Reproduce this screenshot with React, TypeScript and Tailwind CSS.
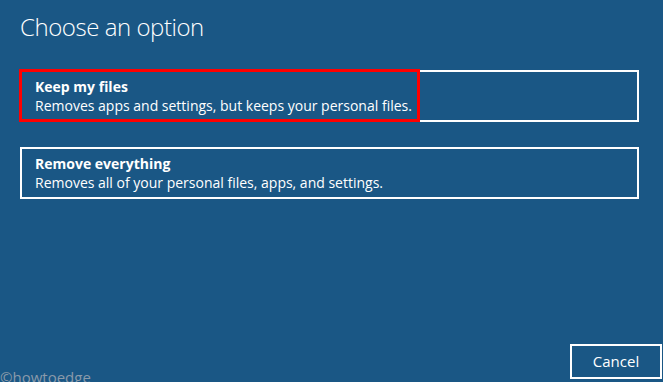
export default function App() {
  const font = { fontFamily: '"Open Sans", "Noto Sans", sans-serif' };
  return (
    <div
      className="relative w-[663px] h-[382px] overflow-hidden bg-[#1a5785] text-white flex flex-col"
      style={font}
    >
      <div className="pl-[20px] pt-[11px] text-[24px] leading-[32px] font-light tracking-[-0.45px]">
        Choose an option
      </div>
      <div className="pl-[20px] pt-[27px] flex flex-col gap-[25px]">
        <div className="relative w-[619px] h-[52px] border-2 border-white px-[13px] pt-[5px] flex flex-col">
          <div className="text-[14px] leading-[19px] font-bold">Keep my files</div>
          <div className="text-[14px] leading-[19px]">
            Removes apps and settings, but keeps your personal files.
          </div>
          <div className="absolute left-[-3px] top-[-3px] w-[401px] h-[53px] border-[3px] border-[#ff0000]" />
        </div>
        <div className="w-[619px] h-[52px] border-2 border-white px-[13px] pt-[5px] flex flex-col">
          <div className="text-[14px] leading-[19px] font-bold">Remove everything</div>
          <div className="text-[14px] leading-[19px]">
            Removes all of your personal files, apps, and settings.
          </div>
        </div>
      </div>
      <div className="flex-1" />
      <div className="flex justify-end pr-[1px] pb-[3px]">
        <div className="w-[92px] h-[35px] border-2 border-white flex items-center justify-center text-[15px]">
          Cancel
        </div>
      </div>
      <div className="absolute left-0 top-[367px] text-[15px] leading-[20px] text-[#8a9aaa]">
        ©howtoedge
      </div>
    </div>
  );
}
